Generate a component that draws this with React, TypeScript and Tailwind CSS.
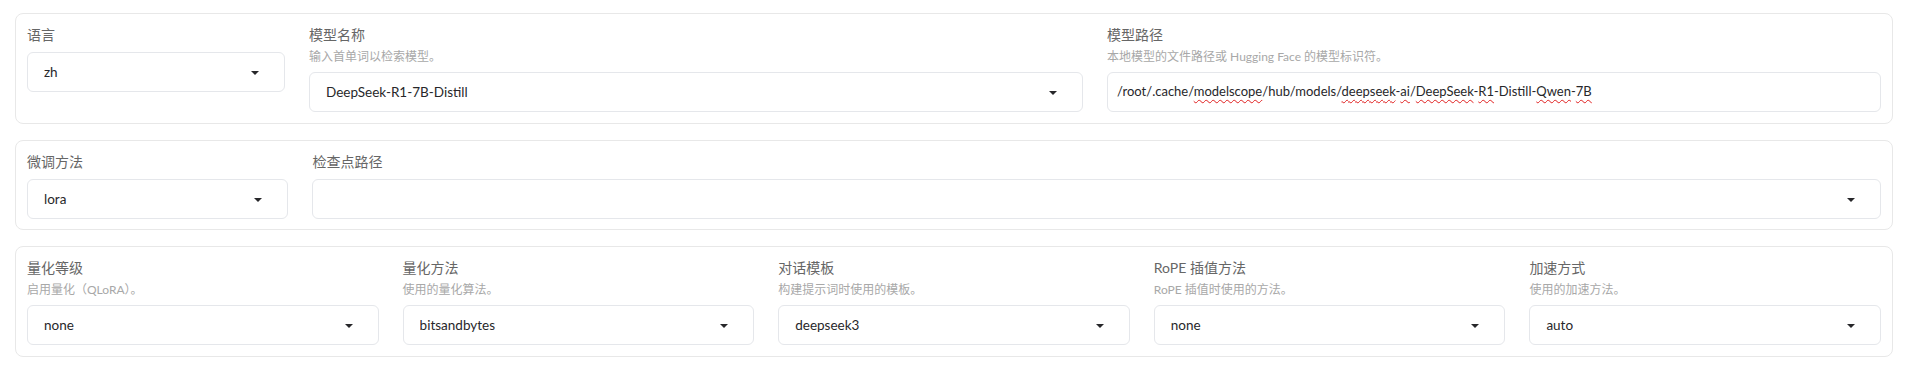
import React from "react";

const FONT = { fontFamily: 'Lato, "Noto Sans CJK SC", sans-serif' };

function Arrow() {
  return (
    <svg width="18" height="18" viewBox="0 0 18 18" className="shrink-0">
      <path d="M5 8l4 4 4-4z" fill="#27272a" />
    </svg>
  );
}

function Label({ text, hint }: { text: string; hint?: string }) {
  return (
    <div className="flex flex-col">
      <span className="text-[14px] leading-[20px] text-[#666666]">{text}</span>
      {hint && (
        <span className="mt-[4px] text-[12px] leading-[16px] text-[#a8a8a8]">{hint}</span>
      )}
    </div>
  );
}

function Select({ value }: { value: string }) {
  return (
    <div className="mt-[7px] h-[40px] border border-[#e5e7eb] rounded-[6px] bg-white flex items-center pl-[16px] pr-[20px]">
      <span className="flex-1 text-[13.5px] text-[#27272a] truncate">{value}</span>
      <Arrow />
    </div>
  );
}

function Field({
  label,
  hint,
  value,
  className,
}: {
  label: string;
  hint?: string;
  value: string;
  className: string;
}) {
  return (
    <div className={`${className} min-w-0 flex flex-col`}>
      <Label text={label} hint={hint} />
      <Select value={value} />
    </div>
  );
}

function Sq({ children }: { children: React.ReactNode }) {
  return (
    <span className="underline decoration-wavy decoration-[#e02020] decoration-1 underline-offset-[3px]">
      {children}
    </span>
  );
}

export default function App() {
  return (
    <div className="w-[1920px] h-[368px] bg-white pt-[13px]" style={FONT}>
      <div className="ml-[15px] w-[1878px] flex flex-col gap-4">
        {/* Row 1 */}
        <div className="border border-[#e8e8e8] rounded-[8px] p-[11px] flex gap-6">
          <Field className="flex-1" label="语言" value="zh" />
          <Field
            className="flex-[3]"
            label="模型名称"
            hint="输入首单词以检索模型。"
            value="DeepSeek-R1-7B-Distill"
          />
          <div className="flex-[3] min-w-0 flex flex-col">
            <Label text="模型路径" hint="本地模型的文件路径或 Hugging Face 的模型标识符。" />
            <div className="mt-[7px] h-[40px] border border-[#e5e7eb] rounded-[6px] bg-white flex items-center px-[9px]">
              <span className="text-[13px] text-[#27272a] whitespace-nowrap">
                /root/.cache/<Sq>modelscope</Sq>/hub/models/<Sq>deepseek</Sq>-<Sq>ai</Sq>/
                <Sq>DeepSeek</Sq>-<Sq>R1</Sq>-Distill-<Sq>Qwen</Sq>-<Sq>7B</Sq>
              </span>
            </div>
          </div>
        </div>

        {/* Row 2 */}
        <div className="border border-[#e8e8e8] rounded-[8px] pt-[11px] px-[11px] pb-[10px] flex gap-6">
          <Field className="flex-1" label="微调方法" value="lora" />
          <Field className="flex-[6]" label="检查点路径" value="" />
        </div>

        {/* Row 3 */}
        <div className="border border-[#e8e8e8] rounded-[8px] p-[11px] flex gap-6">
          <Field className="flex-1" label="量化等级" hint="启用量化（QLoRA）。" value="none" />
          <Field className="flex-1" label="量化方法" hint="使用的量化算法。" value="bitsandbytes" />
          <Field className="flex-1" label="对话模板" hint="构建提示词时使用的模板。" value="deepseek3" />
          <Field className="flex-1" label="RoPE 插值方法" hint="RoPE 插值时使用的方法。" value="none" />
          <Field className="flex-1" label="加速方式" hint="使用的加速方法。" value="auto" />
        </div>
      </div>
    </div>
  );
}
